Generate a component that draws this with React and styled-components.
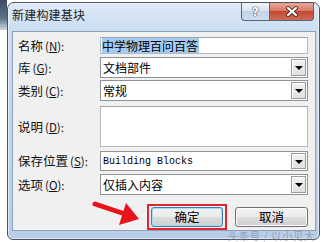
import styled, { createGlobalStyle } from 'styled-components'

const GlobalStyle = createGlobalStyle`
  html, body {
    margin: 0;
    padding: 0;
    background: #fff;
  }
  body {
    font-family: "Noto Sans CJK SC", "Noto Sans", sans-serif;
    color: #000;
  }
`

const Page = styled.div`
  width: 323px;
  height: 242px;
  box-sizing: border-box;
  padding: 2px 3px 0 7px;
  position: relative;
  overflow: hidden;
  background:
    linear-gradient(180deg, #3c4d63 0%, #5d7089 60%, #cdd8e4 100%) 0 0 / 7px 30px no-repeat,
    #fff;
`

const Window = styled.div`
  width: 313px;
  height: 238px;
  box-sizing: border-box;
  border: 1px solid #4b5562;
  border-radius: 7px 7px 6px 6px;
  background: linear-gradient(180deg, #dce9f7 0%, #c9dcf1 14%, #bfd4ed 60%, #b7cde8 100%);
  box-shadow: inset 0 0 0 1px rgba(255, 255, 255, 0.55);
  display: flex;
  flex-direction: column;
  padding: 0 3px 8px 4px;
`

const TitleBar = styled.div`
  height: 28px;
  display: flex;
  align-items: flex-start;
`

const Title = styled.div`
  font-size: 12px;
  line-height: 12px;
  letter-spacing: 0.2px;
  margin-top: 6px;
  color: #222;
`

const CaptionButtons = styled.div`
  margin-left: auto;
  margin-right: 2px;
  display: flex;
`

const CaptionButton = styled.div`
  height: 18px;
  box-sizing: border-box;
  display: flex;
  align-items: center;
  justify-content: center;
  border: 1px solid #55657a;
  border-top: none;
  width: ${p => (p.$close ? '44px' : '29px')};
  border-radius: ${p => (p.$close ? '0 0 4px 0' : '0 0 0 4px')};
  border-left: ${p => (p.$close ? 'none' : '1px solid #55657a')};
  background: ${p =>
    p.$close
      ? 'linear-gradient(180deg, #e9a99c 0%, #d77a68 45%, #c34a34 50%, #d06a52 100%)'
      : 'linear-gradient(180deg, #eef3f9 0%, #d9e4f1 45%, #c4d4e8 50%, #cddcee 100%)'};
`

const HelpMark = styled.span`
  font-family: "DejaVu Sans", sans-serif;
  font-weight: bold;
  font-size: 12px;
  color: #fff;
  text-shadow: 0 0 1px #445, 0 0 1px #445, 0 0 1px #445;
`

const Panel = styled.div`
  flex: 1;
  background: #f0f0f0;
  border: 1px solid #8ca1bb;
  padding: 5px 7px 0 5px;
  display: flex;
  flex-direction: column;
`

const Row = styled.div`
  display: grid;
  grid-template-columns: 82px 1fr;
  align-items: center;
  height: ${p => p.$h}px;
  margin-top: ${p => p.$gap || 0}px;
`

const Label = styled.div`
  font-size: 12.5px;
  line-height: 14px;
  white-space: nowrap;
  color: #111;
`

const Acc = styled.span`
  margin-left: 2px;
  font-size: 11.5px;
  u {
    text-decoration: underline;
    text-underline-offset: 1px;
  }
`

const TextBox = styled.div`
  height: 100%;
  box-sizing: border-box;
  background: #fff;
  border: 1px solid #b5bac2;
  border-top-color: #9da2aa;
  display: flex;
  align-items: center;
  padding-left: 1px;
  font-size: 12px;
`

const Selected = styled.span`
  background: #a4cbf2;
  line-height: 15px;
  padding-right: 1px;
`

const Select = styled.div`
  height: 100%;
  box-sizing: border-box;
  background: #fff;
  border: 1px solid #8f9296;
  display: flex;
  align-items: center;
  padding: 1px 1px 1px 2px;
  font-size: ${p => (p.$mono ? '10px' : '12px')};
  font-family: ${p =>
    p.$mono ? '"Liberation Mono", monospace' : '"Noto Sans CJK SC", sans-serif'};
`

const SelectText = styled.span`
  flex: 1;
  white-space: nowrap;
`

const DropButton = styled.div`
  width: 15px;
  height: 100%;
  box-sizing: border-box;
  background: linear-gradient(180deg, #f2f2f2 0%, #e0e0e0 100%);
  border: 1px solid #9a9a9a;
  box-shadow: inset 1px 1px 0 #fff;
  display: flex;
  align-items: center;
  justify-content: center;
`

const Arrow = styled.span`
  width: 0;
  height: 0;
  border-left: 4px solid transparent;
  border-right: 4px solid transparent;
  border-top: 4px solid #000;
  margin-top: 1px;
`

const ButtonBar = styled.div`
  display: flex;
  justify-content: flex-end;
  align-items: center;
  gap: 8px;
  margin-top: 10px;
`

const Highlight = styled.div`
  border: 2px solid #e3232f;
  padding: 1px 2px;
  display: flex;
`

const Button = styled.button`
  width: ${p => p.$w}px;
  height: 20px;
  box-sizing: border-box;
  font-family: "Noto Sans CJK SC", sans-serif;
  font-size: 12.5px;
  line-height: 14px;
  color: #000;
  border-radius: 3px;
  border: 1px solid ${p => (p.$focus ? '#3c7fb1' : '#707070')};
  background: linear-gradient(180deg, #f3f3f3 0%, #ebebeb 48%, #dcdcdc 52%, #cfcfcf 100%);
  box-shadow: ${p => (p.$focus ? 'inset 0 0 0 1px #a6dcf6' : 'inset 0 0 0 1px #fcfcfc')};
  padding: 0;
`

const Watermark = styled.div`
  position: absolute;
  right: 8px;
  bottom: -1px;
  font-size: 10.5px;
  color: rgba(120, 130, 145, 0.6);
  letter-spacing: 0.5px;
`

const Pointer = styled.svg`
  position: absolute;
  left: 90px;
  top: 196px;
`

const fields = [
  { key: 'lib', label: '库', acc: 'G', value: '文档部件', gap: 3 },
  { key: 'cat', label: '类别', acc: 'C', value: '常规', gap: 3 },
]

const AccLabel = ({ text, acc }) => (
  <Label>
    {text}
    <Acc>
      (<u>{acc}</u>):
    </Acc>
  </Label>
)

const Dropdown = ({ value, mono }) => (
  <Select $mono={mono}>
    <SelectText>{value}</SelectText>
    <DropButton>
      <Arrow />
    </DropButton>
  </Select>
)

export default function App() {
  return (
    <>
      <GlobalStyle />
      <Page>
        <Window>
          <TitleBar>
            <Title>新建构建基块</Title>
            <CaptionButtons>
              <CaptionButton>
                <HelpMark>?</HelpMark>
              </CaptionButton>
              <CaptionButton $close>
                <svg width="14" height="11" viewBox="0 0 14 11">
                  <path d="M3 2 L11 9 M11 2 L3 9" stroke="#5a2a22" strokeWidth="4" strokeLinecap="round" />
                  <path d="M3 2 L11 9 M11 2 L3 9" stroke="#fff" strokeWidth="2.2" strokeLinecap="round" />
                </svg>
              </CaptionButton>
            </CaptionButtons>
          </TitleBar>
          <Panel>
            <Row $h={17}>
              <AccLabel text="名称" acc="N" />
              <TextBox>
                <Selected>中学物理百问百答</Selected>
              </TextBox>
            </Row>
            {fields.map(f => (
              <Row key={f.key} $h={20} $gap={f.gap}>
                <AccLabel text={f.label} acc={f.acc} />
                <Dropdown value={f.value} />
              </Row>
            ))}
            <Row $h={41} $gap={6}>
              <AccLabel text="说明" acc="D" />
              <TextBox />
            </Row>
            <Row $h={20} $gap={4}>
              <AccLabel text="保存位置" acc="S" />
              <Dropdown value="Building Blocks" mono />
            </Row>
            <Row $h={20} $gap={3}>
              <AccLabel text="选项" acc="O" />
              <Dropdown value="仅插入内容" />
            </Row>
            <ButtonBar>
              <Highlight>
                <Button $w={72} $focus>确定</Button>
              </Highlight>
              <Button $w={73}>取消</Button>
            </ButtonBar>
          </Panel>
        </Window>
        <Pointer width="55" height="40" viewBox="0 0 55 40">
          <path d="M5 8 L32 17" stroke="#e8141c" strokeWidth="5" strokeLinecap="round" />
          <polygon points="49,23 29,29 36,7" fill="#e8141c" />
        </Pointer>
        <Watermark>头条号 / 以小见大</Watermark>
      </Page>
    </>
  )
}
